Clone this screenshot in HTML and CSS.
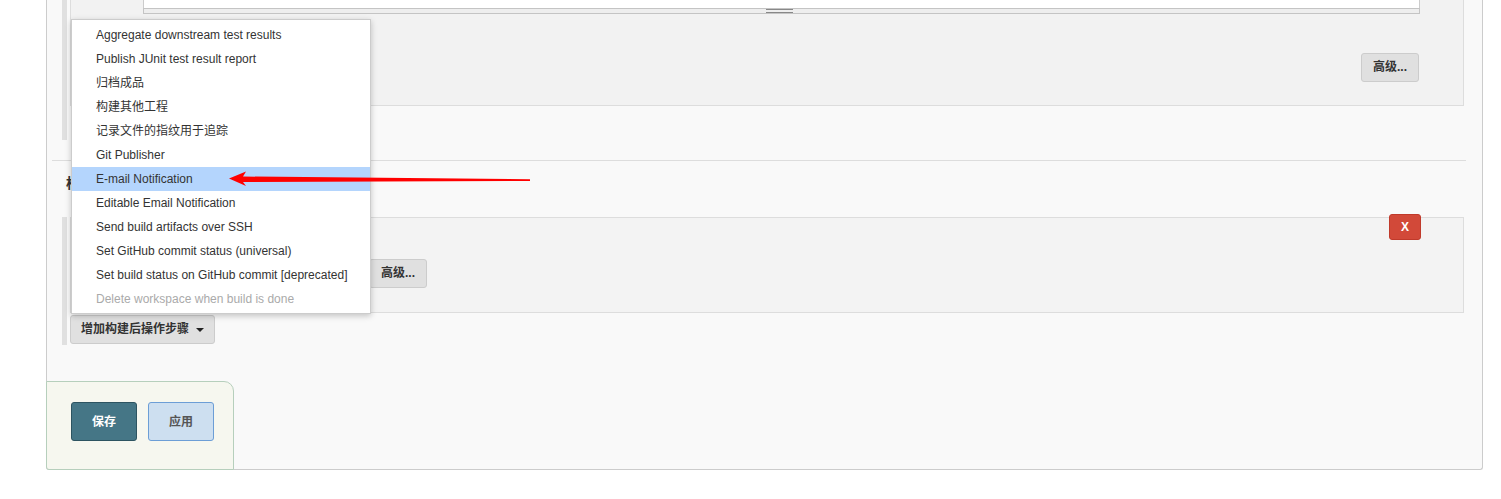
FILE: index.html
```html
<!DOCTYPE html>
<html lang="zh-CN">
<head>
<meta charset="utf-8">
<title>Jenkins 配置</title>
<link rel="stylesheet" href="styles.css">
</head>
<body>
<div class="page">
  <div class="section sec1">
    <div class="chunk chunk1">
      <div class="textarea"></div>
      <div class="resizer"><span class="grip"></span></div>
      <div class="right-row"><button class="btn">高级...</button></div>
    </div>
    <div class="sec1-tail"></div>
  </div>

  <div class="header">构建后操作</div>

  <div class="section sec2">
    <div class="chunk chunk2">
      <button class="btn-x">X</button>
      <div class="left-row"><button class="btn">高级...</button></div>
    </div>
    <button class="btn btn-add">增加构建后操作步骤 <span class="caret"></span></button>
  </div>

  <div class="savebar">
    <button class="btn-save">保存</button>
    <button class="btn-apply">应用</button>
  </div>
</div>

<ul class="menu">
  <li>Aggregate downstream test results</li>
  <li>Publish JUnit test result report</li>
  <li>归档成品</li>
  <li>构建其他工程</li>
  <li>记录文件的指纹用于追踪</li>
  <li>Git Publisher</li>
  <li class="active">E-mail Notification</li>
  <li>Editable Email Notification</li>
  <li>Send build artifacts over SSH</li>
  <li>Set GitHub commit status (universal)</li>
  <li>Set build status on GitHub commit [deprecated]</li>
  <li class="disabled">Delete workspace when build is done</li>
</ul>

<svg class="arrow" width="1501" height="499" viewBox="0 0 1501 499">
  <polygon points="229,178.5 246,171.5 243,176.5 530,179.3 530,181 243,182 246,186" fill="#ff0000"/>
</svg>
</body>
</html>
```

FILE: styles.css
```css
* { box-sizing: border-box; }

html, body {
  margin: 0;
  padding: 0;
  background: #fff;
}

body {
  font-family: "Liberation Sans", Arial, "Noto Sans CJK SC", sans-serif;
  font-size: 12px;
  color: #333;
  width: 1501px;
  height: 499px;
  overflow: hidden;
  position: relative;
}

.page {
  margin-left: 46px;
  width: 1437px;
  height: 470px;
  background: #f9f9f9;
  border: 1px solid #ccc;
  border-top: none;
  border-radius: 0 0 3px 3px;
  display: flex;
  flex-direction: column;
}

.section {
  margin-left: 15px;
  margin-right: 18px;
  border-left: 5px solid #e0e0e0;
  padding-left: 3px;
}

.chunk {
  background: #f2f2f2;
  border: 1px solid #ddd;
  position: relative;
}

.chunk1 {
  border-top: none;
  padding-bottom: 23px;
}

.textarea {
  margin-left: 72px;
  margin-right: 43px;
  height: 8px;
  background: #fff;
  border-left: 1px solid #ccc;
  border-right: 1px solid #ccc;
}

.resizer {
  margin-left: 72px;
  margin-right: 43px;
  height: 6px;
  background: #eee;
  border: 1px solid #c4c4c4;
  display: flex;
  justify-content: center;
  align-items: center;
}

.grip {
  width: 27px;
  height: 4px;
  border-top: 1px solid #888;
  border-bottom: 1px solid #888;
  margin-left: -4px;
}

.right-row {
  display: flex;
  justify-content: flex-end;
  margin-top: 39px;
  margin-right: 44px;
}

.btn {
  height: 29px;
  padding: 0 11px;
  background: #e0e0e0;
  border: 1px solid #ccc;
  border-radius: 3px;
  font-family: "Liberation Sans", Arial, "Noto Sans CJK SC", sans-serif;
  font-size: 12px;
  font-weight: bold;
  color: #333;
  line-height: 27px;
}

.sec1 {
  height: 140px;
}

.header {
  margin-top: 20px;
  margin-left: 5px;
  margin-right: 16px;
  border-top: 1px solid #ddd;
  height: 57px;
  padding-left: 14px;
  padding-top: 11px;
  font-size: 14px;
  font-weight: bold;
  color: #333;
}

.sec2 {
  padding-bottom: 1px;
}

.chunk2 {
  height: 96px;
  background: #f3f3f3;
  padding-top: 41px;
}

.left-row {
  display: flex;
  padding-left: 298px;
}

.btn-x {
  position: absolute;
  top: -4px;
  right: 42px;
  width: 32px;
  height: 26px;
  background: #d24939;
  border: 1px solid #c03a2b;
  border-radius: 3px;
  color: #fff;
  font-family: "Liberation Sans", Arial, sans-serif;
  font-weight: bold;
  font-size: 12px;
  padding: 0;
}

.btn-add {
  margin-top: 2px;
  width: 145px;
  padding: 0 10px 0 10px;
  display: flex;
  align-items: center;
  justify-content: space-between;
}

.caret {
  width: 0;
  height: 0;
  border-left: 4px solid transparent;
  border-right: 4px solid transparent;
  border-top: 4px solid #222;
}

.savebar {
  margin-top: 36px;
  margin-left: -1px;
  margin-bottom: -1px;
  width: 188px;
  height: 89px;
  background: #f6f7ef;
  border: 1px solid #b6cfbc;
  border-radius: 0 10px 0 3px;
  padding: 20px 0 0 24px;
  display: flex;
  gap: 11px;
  align-items: flex-start;
}

.btn-save,
.btn-apply {
  width: 66px;
  height: 39px;
  border-radius: 3px;
  font-family: "Liberation Sans", Arial, "Noto Sans CJK SC", sans-serif;
  font-size: 12px;
  font-weight: bold;
  padding: 0 0 2px 0;
}

.btn-save {
  background: #457686;
  border: 1px solid #2d5461;
  color: #fff;
}

.btn-apply {
  background: #cddff0;
  border: 1px solid #6c9ed6;
  color: #555;
}

.menu {
  position: absolute;
  left: 71px;
  top: 19px;
  width: 300px;
  margin: 0;
  padding: 3px 0 2px 0;
  list-style: none;
  background: #fff;
  border: 1px solid #ccc;
  box-shadow: 0 2px 6px rgba(0, 0, 0, 0.22);
  z-index: 10;
}

.menu li {
  height: 24px;
  line-height: 24px;
  padding-left: 24px;
  color: #333;
  white-space: nowrap;
}

.menu li.active {
  background: #b4d5fd;
}

.menu li.disabled {
  color: #aaa;
}

.arrow {
  position: absolute;
  left: 0;
  top: 0;
  z-index: 20;
  pointer-events: none;
}
```
